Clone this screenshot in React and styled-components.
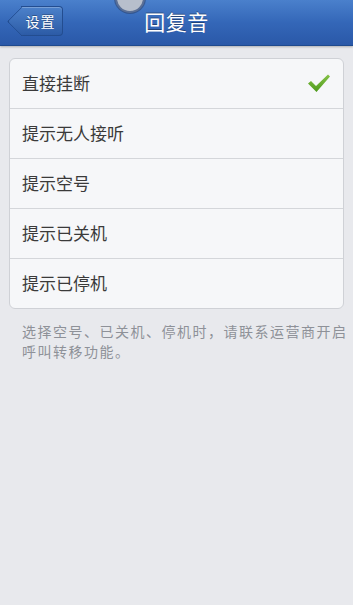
import styled, { createGlobalStyle } from "styled-components"

const GlobalStyle = createGlobalStyle`
    html, body {
        margin: 0;
        padding: 0;
        background: #e8e9ed;
    }
    body {
        font-family: "Noto Sans CJK SC", "Liberation Sans", sans-serif;
    }
`

const Page = styled.div`
    width: 353px;
    height: 605px;
    background: #e8e9ed;
    overflow: hidden;
    position: relative;
`
const NavBar = styled.div`
    position: relative;
    height: 45px;
    background: linear-gradient(#4a80cc, #3467b8 50%, #2a58a8);
    border-bottom: 1px solid #1f4a8e;
    box-shadow: 0 1px 2px rgba(0, 0, 0, 0.25);
    display: flex;
    align-items: center;
    justify-content: center;
`
const BackButton = styled.div`
    position: absolute;
    left: 21px;
    top: 6px;
    height: 28px;
    width: 41px;
    display: flex;
    align-items: center;
    justify-content: center;
    color: #fff;
    font-size: 14px;
    background: linear-gradient(#4c81ca, #2c5ba6);
    border: 1px solid #234d90;
    border-left: none;
    border-radius: 0 4px 4px 0;
    box-shadow: inset 0 1px 0 rgba(255, 255, 255, 0.25);

    &::before {
        content: "";
        position: absolute;
        left: -10px;
        top: 4px;
        width: 20px;
        height: 20px;
        transform: rotate(45deg);
        background: linear-gradient(135deg, #4c81ca, #2c5ba6);
        border-left: 1px solid #234d90;
        border-bottom: 1px solid #234d90;
        border-radius: 0 0 0 3px;
    }
`
const BackLabel = styled.span`
    position: relative;
    margin-left: -2px;
    letter-spacing: 1px;
    text-shadow: 0 -1px 0 rgba(0, 0, 0, 0.3);
`
const Title = styled.h1`
    margin: 0 0 3px;
    color: #fff;
    font-size: 21px;
    font-weight: 400;
    letter-spacing: 0.5px;
    text-shadow: 0 -1px 0 rgba(0, 0, 0, 0.35);
`
const Bubble = styled.div`
    position: absolute;
    left: 115px;
    top: -17px;
    width: 26px;
    height: 26px;
    border-radius: 50%;
    background: #b7bfcc;
    border: 2px solid #5a6f96;
    box-shadow: 0 0 0 1px rgba(40, 60, 100, 0.5);
`
const Content = styled.div`
    padding: 12px 9px 0;
`
const Group = styled.div`
    background: #f6f7f9;
    border: 1px solid #cfd1d6;
    border-radius: 6px;
    overflow: hidden;
`
const Row = styled.div`
    height: 47px;
    display: flex;
    align-items: center;
    justify-content: space-between;
    padding: 0 12px 2px;
    font-size: 17px;
    color: #3a3a3a;
    border-top: ${p => (p.$first ? "none" : "1px solid #d4d6da")};
`
const Note = styled.p`
    margin: 12px 0 0;
    padding: 0 0 0 22px;
    font-size: 14px;
    line-height: 20px;
    letter-spacing: 1.5px;
    color: #8e9198;
`

const Check = () => (
    <svg width="24" height="20" viewBox="0 0 24 20">
        <defs>
            <linearGradient id="ck" x1="0" y1="0" x2="0" y2="1">
                <stop offset="0" stopColor="#86c247" />
                <stop offset="1" stopColor="#4e9a1c" />
            </linearGradient>
        </defs>
        <path d="M1 10.5 L4 8 L9 13 L21 1.5 L23 3.5 L9.5 19 Z" fill="url(#ck)" />
    </svg>
)

const items = ["直接挂断", "提示无人接听", "提示空号", "提示已关机", "提示已停机"]

export default function App() {
    return (
        <Page>
            <GlobalStyle />
            <NavBar>
                <BackButton><BackLabel>设置</BackLabel></BackButton>
                <Title>回复音</Title>
                <Bubble />
            </NavBar>
            <Content>
                <Group>
                    {items.map((t, i) => (
                        <Row key={t} $first={i === 0}>
                            {t}
                            {i === 0 ? <Check /> : null}
                        </Row>
                    ))}
                </Group>
            </Content>
            <Note>选择空号、已关机、停机时，请联系运营商开启呼叫转移功能。</Note>
        </Page>
    )
}
